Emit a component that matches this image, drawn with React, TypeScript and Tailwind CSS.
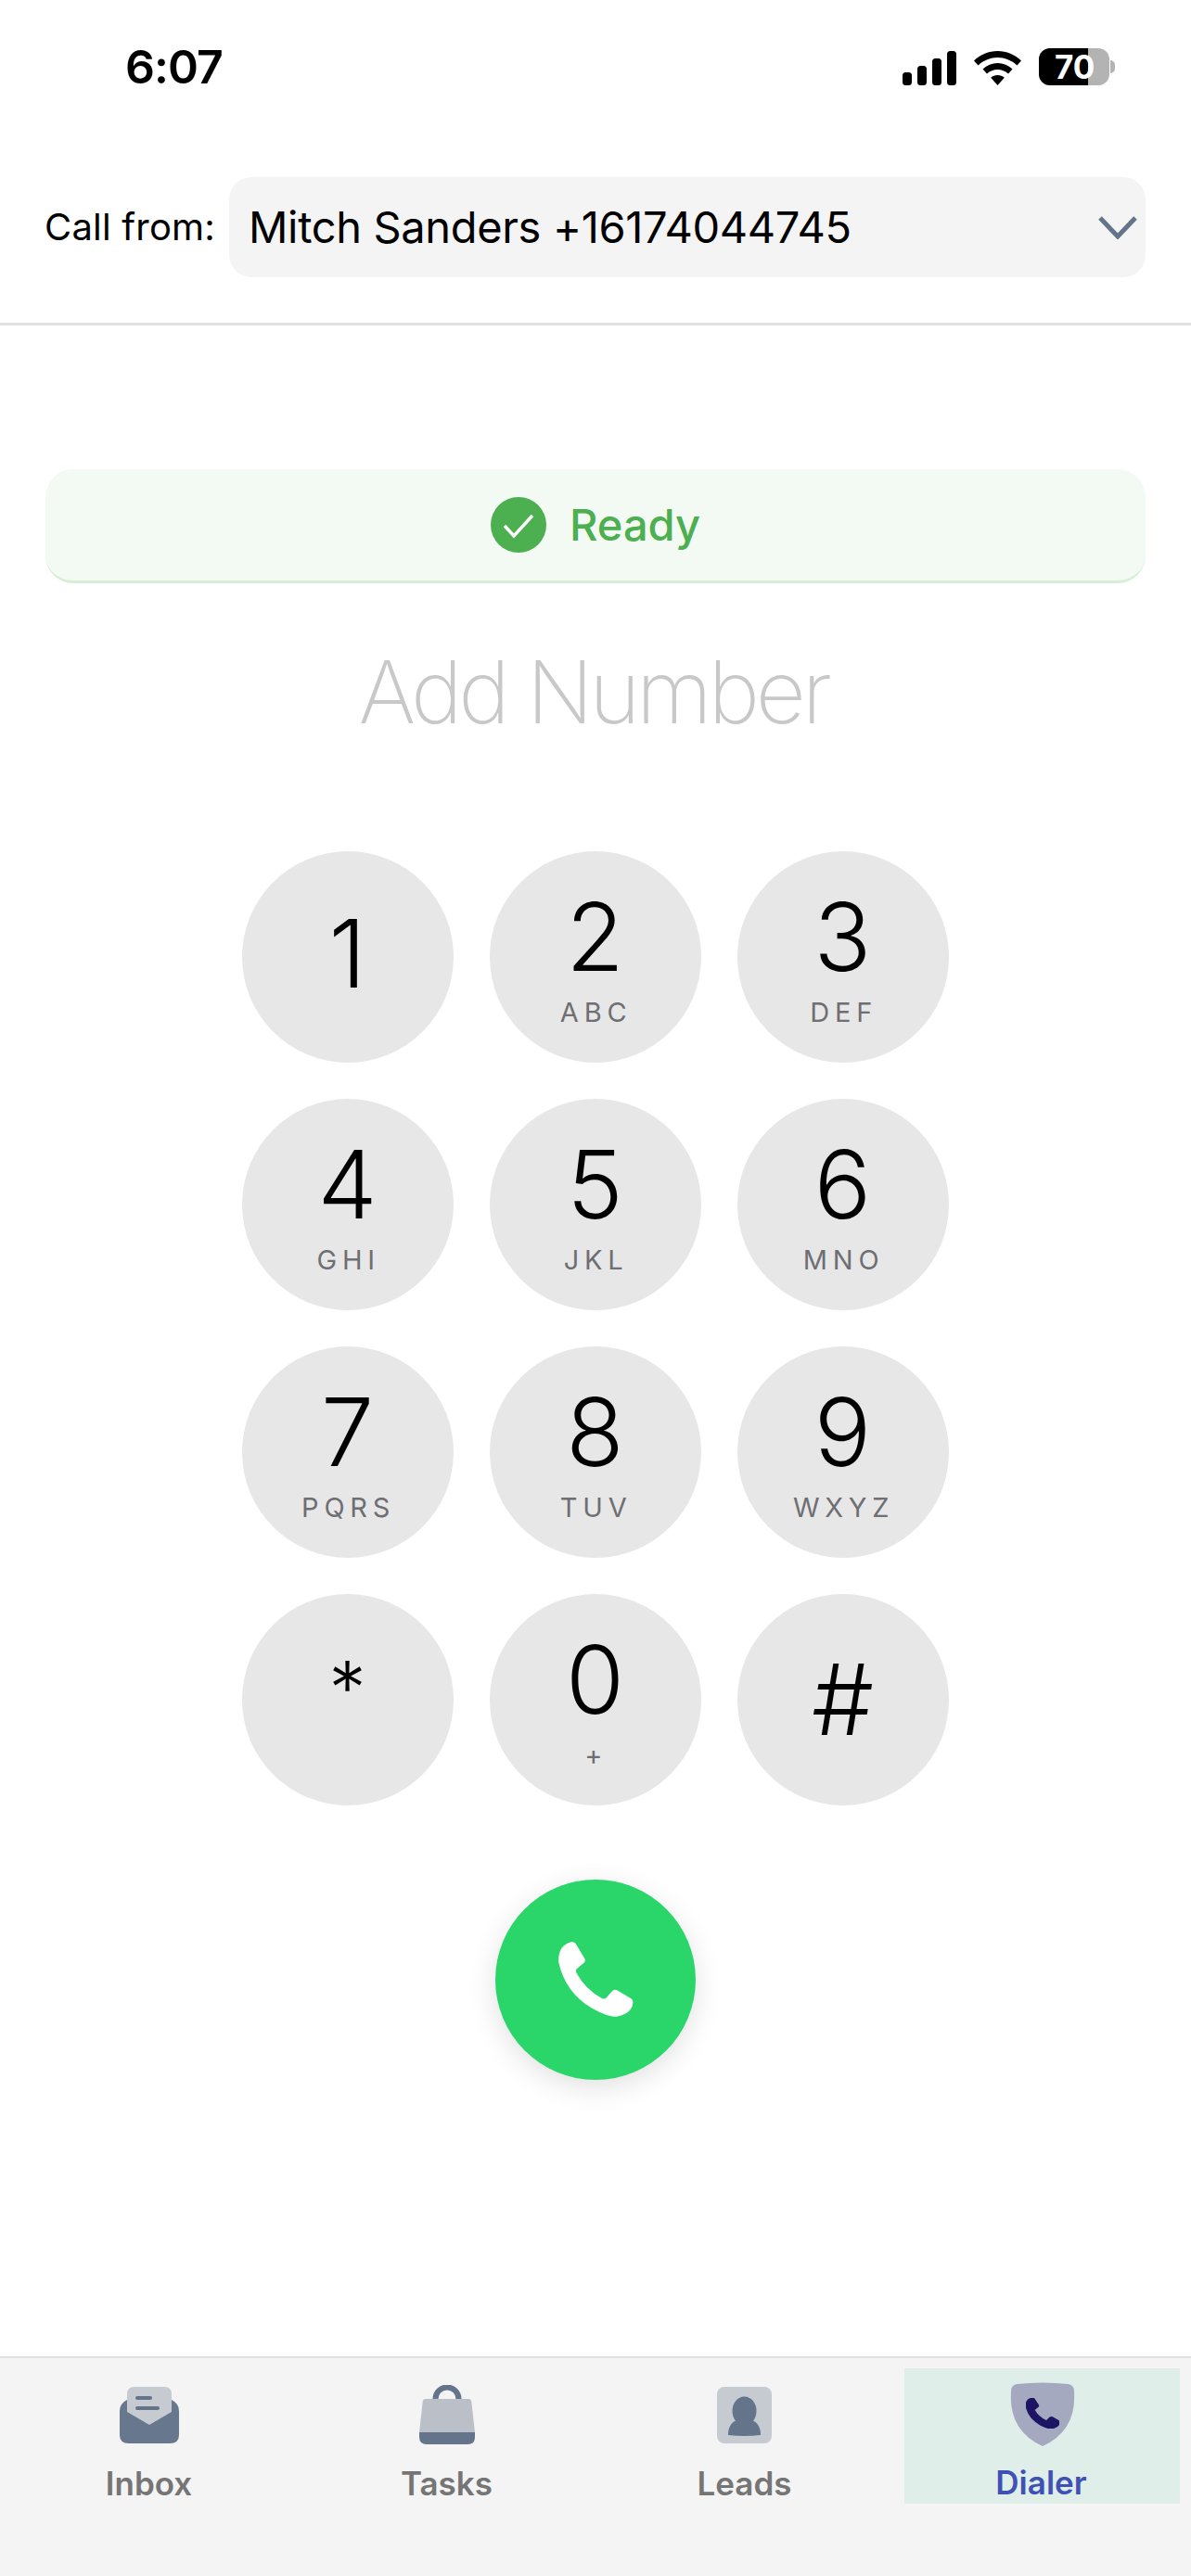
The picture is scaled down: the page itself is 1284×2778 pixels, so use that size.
const keys = [
  { d: "1", l: "" },
  { d: "2", l: "ABC" },
  { d: "3", l: "DEF" },
  { d: "4", l: "GHI" },
  { d: "5", l: "JKL" },
  { d: "6", l: "MNO" },
  { d: "7", l: "PQRS" },
  { d: "8", l: "TUV" },
  { d: "9", l: "WXYZ" },
  { d: "*", l: "" },
  { d: "0", l: "+" },
  { d: "#", l: "" },
];

const handset =
  "M405 329Q414 327 418 333L447 381Q452 389 446 395L423 415Q417 420 421 428Q450 482 503 510Q512 515 518 508L536 487Q543 480 552 484L597 511Q604 515 603 525Q600 560 548 570Q520 570 470 542Q385 490 364 395Q360 340 405 329Z";

function StatusBar() {
  return (
    <div className="flex h-[191px] items-start justify-between pl-[135px] pr-[82px] pt-[52px]">
      <span className="text-[50px] leading-[41px] font-semibold tracking-[-1px] text-black">6:07</span>
      <div className="flex items-center">
        <svg width="58" height="37" viewBox="0 0 58 37" className="mt-[2px]">
          <rect x="0" y="23" width="10" height="14" rx="3.5" fill="#000" />
          <rect x="16" y="16" width="10" height="21" rx="3.5" fill="#000" />
          <rect x="32" y="8" width="10" height="29" rx="3.5" fill="#000" />
          <rect x="48" y="0" width="10" height="37" rx="3.5" fill="#000" />
        </svg>
        <svg width="51" height="37" viewBox="0 0 51 37" className="ml-[19px] mt-[2px]">
          <path d="M25.5 0C35 0 44 3.7 51 10.5L46.5 15.500C40.500 10 33 7 25.500 7S10.500 10 4.500 15.500L0 10.500C7 3.700 16 0 25.500 0Z" fill="#000" />
          <path d="M25.500 13C31.500 13 37 15.300 41.500 19.500L37 24.500C33.700 21.500 29.700 20 25.500 20S17.300 21.500 14 24.500L9.500 19.500C14 15.300 19.500 13 25.500 13Z" fill="#000" />
          <path d="M25.500 26C28.300 26 30.800 27 32.800 28.800L25.500 37L18.200 28.800C20.200 27 22.700 26 25.500 26Z" fill="#000" />
        </svg>
        <div className="relative ml-[19px] flex h-[40px] w-[76px] items-center overflow-hidden rounded-[12px] bg-[#b3b3b3]">
          <div className="absolute inset-y-0 left-0 w-[53px] bg-black" />
          <span className="relative ml-[17px] text-[35px] leading-none font-bold text-white">70</span>
        </div>
        <div className="ml-[1px] h-[14px] w-[5px] rounded-r-full bg-[#b3b3b3]" />
      </div>
    </div>
  );
}

function Header() {
  return (
    <div className="flex h-[160px] border-b-[3px] border-[#e0e0e0] pl-[48px] pr-[49px]">
      <div className="flex h-[108px] w-full items-center">
        <span className="w-[199px] text-[40px] tracking-[0.2px] text-black">Call from:</span>
        <div className="flex h-[108px] flex-1 items-center justify-between rounded-[24px] bg-[#f4f4f4] pl-[21px] pr-[9px]">
          <span className="text-[47px] tracking-[-0.35px] text-black">Mitch Sanders +16174044745</span>
          <svg width="42" height="26" viewBox="0 0 42 26" fill="none" stroke="#64748b" strokeWidth="5">
            <path d="M2 3L21 23L40 3" />
          </svg>
        </div>
      </div>
    </div>
  );
}

function ReadyBanner() {
  return (
    <div className="mx-[49px] mt-[155px] flex h-[123px] items-center justify-center gap-[25px] rounded-[30px] border-b-[3px] border-[#d5efd5] bg-[#f3f9f3]">
      <svg width="60" height="60" viewBox="0 0 60 60">
        <circle cx="30" cy="30" r="30" fill="#4caf50" />
        <path d="M15 31L25 42L45 20" fill="none" stroke="#fff" strokeWidth="3.500" />
      </svg>
      <span className="pb-[2px] text-[47px] leading-none font-medium text-[#4caf50]">Ready</span>
    </div>
  );
}

function Keypad() {
  return (
    <div className="mt-[115px] grid grid-cols-[repeat(3,228px)] justify-center gap-[39px] pr-[1px]">
      {keys.map((k) => (
        <button key={k.d} className="flex h-[228px] w-[228px] flex-col items-center rounded-full bg-[#e7e7e7]">
          <span
            className={
              k.l
                ? "mt-[44px] text-[102px] leading-[96px] font-light text-black"
                : k.d === "#"
                  ? "mt-[66px] text-[106px] leading-[96px] font-light text-black"
                  : k.d === "*"
                    ? "mt-[53px] text-[80px] leading-[96px] font-light text-black"
                    : "mt-[62px] text-[102px] leading-[96px] font-light text-black"
            }
          >
            {k.d}
          </span>
          {k.l && (
            <span className="mt-[17px] pl-[0.08em] text-[29px] leading-[34px] tracking-[0.2em] text-[#6e6e73]">{k.l}</span>
          )}
        </button>
      ))}
    </div>
  );
}

function InboxIcon() {
  return (
    <svg width="64" height="61" viewBox="0 0 64 61">
      <path d="M8 14L56 14Q64 18 64 26V52Q64 61 54 61H10Q0 61 0 52V26Q0 18 8 14Z" fill="#64748b" fillOpacity="0.98" />
      <path d="M16 0H48Q56 0 56 8V27L32 41L8 27V8Q8 0 16 0Z" fill="#c5cbd0" />
      <rect x="17" y="10" width="18" height="4" rx="2" fill="#64748b" />
      <rect x="17" y="21" width="26" height="4" rx="2" fill="#64748b" />
    </svg>
  );
}

function TasksIcon() {
  return (
    <svg width="62" height="64" viewBox="0 0 62 64">
      <path d="M18.500 16V15A12.500 12.500 0 0 1 43.500 15V16" fill="none" stroke="#64748b" strokeWidth="6" />
      <path d="M8 15H54Q57 15 57.300 18L61 51H1L4.700 18Q5 15 8 15Z" fill="#bbc0c8" />
      <path d="M1 51H61V56Q61 64 53 64H9Q1 64 1 56Z" fill="#64748b" />
    </svg>
  );
}

function LeadsIcon() {
  return (
    <svg width="59" height="61" viewBox="0 0 59 61">
      <rect width="59" height="61" rx="8" fill="#c5cbd0" />
      <ellipse cx="29.500" cy="26" rx="13" ry="15.500" fill="#64748b" />
      <path d="M12 52Q12 38 24 35H35Q47 38 47 52Q29.500 54 12 52Z" fill="#64748b" />
    </svg>
  );
}

function DialerIcon() {
  return (
    <svg width="70" height="70" viewBox="0 0 70 70">
      <path d="M7 2Q35 -1 63 2Q69 3 69 10Q72 52 35 69Q-2 52 1 10Q1 3 7 2Z" fill="#a4a9bf" />
      <svg x="17" y="17" width="36" height="33" viewBox="360 325 245 248" preserveAspectRatio="none">
        <path d={handset} fill="#1e1464" stroke="#1e1464" strokeWidth="14" strokeLinejoin="round" />
      </svg>
    </svg>
  );
}

const tabs = [
  { name: "Inbox", icon: <InboxIcon />, box: "pt-[20px]" },
  { name: "Tasks", icon: <TasksIcon />, box: "pt-[18px]" },
  { name: "Leads", icon: <LeadsIcon />, box: "pt-[20px]" },
  { name: "Dialer", icon: <DialerIcon />, box: "pt-[15px]", active: true },
];

function TabBar() {
  return (
    <div className="mt-auto grid h-[237px] grid-cols-4 border-t-2 border-[#e0e0e0] bg-[#f4f4f4] pt-[11px]">
      {tabs.map((t) => (
        <div
          key={t.name}
          className={
            t.active
              ? "mx-[12px] flex h-[146px] flex-col items-center bg-[#e0eee9] " + t.box
              : "mx-[12px] flex h-[146px] flex-col items-center " + t.box
          }
        >
          <div className="flex h-[70px] items-start">{t.icon}</div>
          <span
            className={
              t.active
                ? "mt-[16px] pr-[2px] text-[35px] leading-[44px] font-semibold text-[#3f51b5]"
                : "mt-[16px] text-[35px] leading-[44px] font-semibold text-[#757575]"
            }
          >
            {t.name}
          </span>
        </div>
      ))}
    </div>
  );
}

export default function App() {
  return (
    <div className="flex h-[2778px] w-[1284px] flex-col overflow-hidden bg-white font-['Inter',sans-serif]">
      <StatusBar />
      <Header />
      <ReadyBanner />
      <div className="mt-[60px] pr-[5px] text-center text-[94px] leading-[114px] font-extralight tracking-[-4.3px] text-[#c8c8c8]">Add Number</div>
      <Keypad />
      <div className="mt-[80px] flex justify-center">
        <button className="flex h-[216px] w-[216px] items-center justify-center rounded-full bg-[#2ad66a] shadow-[0_8px_30px_rgba(0,0,0,0.12)]">
          <svg width="82" height="82" viewBox="360 328 245 245">
            <path d={handset} fill="#fff" />
          </svg>
        </button>
      </div>
      <TabBar />
    </div>
  );
}
